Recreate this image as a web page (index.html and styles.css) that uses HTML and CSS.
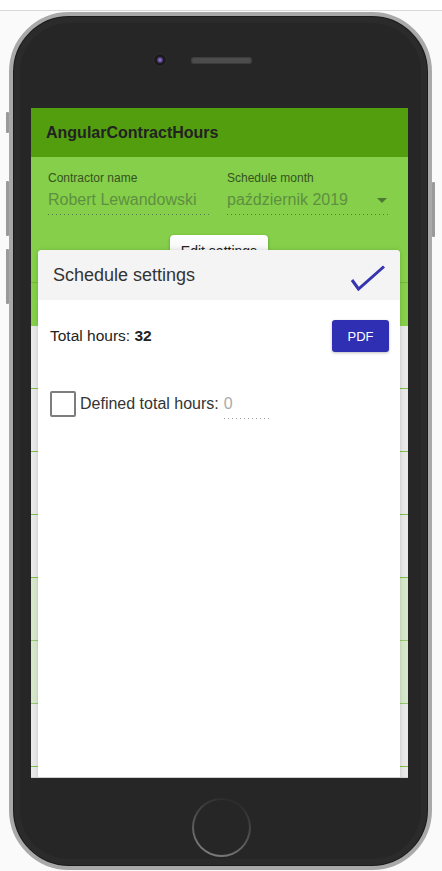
FILE: index.html
```html
<!DOCTYPE html>
<html lang="en">
<head>
<meta charset="utf-8">
<title>AngularContractHours</title>
<link rel="stylesheet" href="styles.css">
</head>
<body>
<div class="topbar"></div>
<div class="phone">
  <span class="btn btn-mute"></span>
  <span class="btn btn-vol1"></span>
  <span class="btn btn-vol2"></span>
  <span class="btn btn-power"></span>
  <div class="phone-top">
    <div class="sensors">
      <span class="camera"><span class="lens"></span></span>
      <span class="speaker"></span>
    </div>
  </div>
  <div class="screen">
    <header class="toolbar">AngularContractHours</header>
    <section class="form">
      <div class="fields">
        <div class="field">
          <div class="label">Contractor name</div>
          <div class="value">Robert Lewandowski</div>
        </div>
        <div class="field">
          <div class="label">Schedule month</div>
          <div class="value select"><span>październik 2019</span><span class="arrow"></span></div>
        </div>
      </div>
      <div class="actions"><button class="edit">Edit settings</button></div>
    </section>
    <div class="table-head"></div>
    <div class="rows">
      <div class="row"></div>
      <div class="row"></div>
      <div class="row"></div>
      <div class="row"></div>
      <div class="row weekend"></div>
      <div class="row weekend"></div>
      <div class="row"></div>
      <div class="row"></div>
    </div>
    <div class="dialog">
      <div class="dialog-head">
        <span class="dialog-title">Schedule settings</span>
        <svg class="check" width="36" height="28" viewBox="0 0 36 28"><polyline points="2,16 8.5,25 34,2.5" fill="none" stroke="#3535b0" stroke-width="3"/></svg>
      </div>
      <div class="dialog-body">
        <div class="total-row">
          <span class="total">Total hours: <b>32</b></span>
          <button class="pdf">PDF</button>
        </div>
        <div class="check-row">
          <span class="checkbox"></span>
          <span class="check-label">Defined total hours:</span>
          <span class="hours-input">0</span>
        </div>
      </div>
    </div>
  </div>
  <div class="phone-bottom">
    <span class="home"><span class="home-inner"></span></span>
  </div>
</div>
</body>
</html>
```
FILE: styles.css
```css
html, body {
  margin: 0;
  padding: 0;
}
body {
  background: #fafafa;
  height: 871px;
  overflow: hidden;
  font-family: "Liberation Sans", Arial, sans-serif;
}
.topbar {
  height: 10px;
  background: #ffffff;
  border-bottom: 1px solid #d9d9d9;
}
.phone {
  position: relative;
  box-sizing: border-box;
  width: 423px;
  height: 858px;
  margin: 1px 0 0 9px;
  padding: 0 19px 0 18px;
  border: 4px solid #a9a9a9;
  border-radius: 60px;
  background: #262626;
  box-shadow: inset 0 0 0 1px #1c1c1c, inset 0 0 0 7px #2b2b2b;
}
.btn {
  position: absolute;
  width: 3px;
  background: #9a9a9a;
  border-radius: 1px;
}
.btn-mute { left: -7px; top: 96px; height: 21px; }
.btn-vol1 { left: -7px; top: 165px; height: 55px; }
.btn-vol2 { left: -7px; top: 233px; height: 55px; }
.btn-power { right: -7px; top: 166px; height: 55px; }
.phone-top {
  box-sizing: border-box;
  height: 92px;
  padding: 37px 0 0 122px;
}
.sensors {
  display: flex;
  align-items: center;
  gap: 24px;
  height: 14px;
}
.camera {
  box-sizing: border-box;
  width: 14px;
  height: 14px;
  border-radius: 50%;
  background: #1b1b1b;
  display: flex;
  align-items: center;
  justify-content: center;
  box-shadow: inset 0 0 0 1px #303030;
}
.lens {
  width: 6px;
  height: 6px;
  border-radius: 50%;
  background: radial-gradient(circle, #8a74b8 0 20%, #55408a 50%, #3a2d5c 100%);
}
.speaker {
  width: 61px;
  height: 7px;
  border-radius: 4px;
  background: #4c4c4c;
  box-shadow: inset 0 0 0 1px #3c3c3c;
}
.screen {
  position: relative;
  width: 377px;
  height: 669px;
  overflow: hidden;
  background: #ffffff;
  border-bottom: 1px solid #cfcfcf;
}
.toolbar {
  height: 49px;
  display: flex;
  align-items: center;
  padding-left: 15px;
  background: #529e0e;
  color: #222222;
  font-weight: bold;
  font-size: 16px;
}
.form {
  background: #85cf4a;
  padding: 14px 18px 15px 17px;
}
.fields {
  display: grid;
  grid-template-columns: 162px 163px;
  column-gap: 17px;
}
.label {
  font-size: 12px;
  line-height: 14px;
  color: #35531f;
}
.value {
  margin-top: 5px;
  font-size: 16px;
  line-height: 20px;
  color: #5e8f40;
  padding-bottom: 5px;
  background-image: linear-gradient(to right, #5a7d45 1px, transparent 1px);
  background-size: 4px 1px;
  background-repeat: repeat-x;
  background-position: 0 100%;
  height: 20px;
}
.select {
  display: flex;
  justify-content: space-between;
  align-items: center;
}
.arrow {
  width: 0;
  height: 0;
  margin-right: 3px;
  border-left: 5px solid transparent;
  border-right: 5px solid transparent;
  border-top: 5px solid #4d7a32;
}
.actions {
  display: flex;
  justify-content: center;
  margin-top: 20px;
}
.edit {
  width: 98px;
  height: 32px;
  border: none;
  border-radius: 4px;
  background: linear-gradient(#ffffff, #ececec);
  box-shadow: 0 1px 3px rgba(0,0,0,0.3);
  font-family: inherit;
  font-size: 14px;
  color: #222222;
  padding: 0;
}
.table-head {
  height: 43px;
  background: #85cf4a;
  border-top: 1px solid #74b840;
}
.row {
  height: 62px;
  background: #e8e8e8;
  border-bottom: 1px solid #7cc14a;
}
.row.weekend {
  background: #d7e8ca;
  border-bottom-color: #94c872;
}
.dialog {
  position: absolute;
  top: 142px;
  left: 7px;
  right: 8px;
  bottom: -20px;
  background: #ffffff;
  border-radius: 4px;
  box-shadow: 0 0 5px rgba(0,0,0,0.12), 0 1px 2px rgba(0,0,0,0.08);
}
.dialog-head {
  height: 50px;
  display: flex;
  align-items: center;
  padding: 0 14px 0 15px;
  background: #f4f4f4;
  border-radius: 4px 4px 0 0;
}
.dialog-title {
  font-size: 18px;
  color: #333333;
}
.check {
  margin-left: auto;
  margin-top: 6px;
}
.dialog-body {
  padding: 20px 11px 0 12px;
}
.total-row {
  display: flex;
  justify-content: space-between;
  align-items: center;
}
.total {
  font-size: 15.5px;
  color: #222222;
}
.pdf {
  width: 57px;
  height: 32px;
  border: none;
  border-radius: 3px;
  background: #2f2fb4;
  color: #ffffff;
  font-family: inherit;
  font-size: 13px;
  padding: 0;
  box-shadow: 0 1px 3px rgba(0,0,0,0.25);
}
.check-row {
  display: flex;
  align-items: center;
  margin-top: 37px;
}
.checkbox {
  box-sizing: border-box;
  width: 26px;
  height: 26px;
  border: 2px solid #7d7d7d;
  border-radius: 2px;
  margin-right: 4px;
}
.check-label {
  font-size: 16px;
  line-height: 20px;
  color: #333333;
}
.hours-input {
  box-sizing: border-box;
  width: 48px;
  margin-left: 5px;
  margin-top: 5px;
  padding-bottom: 5px;
  font-size: 16px;
  line-height: 20px;
  color: #aaaaaa;
  background-image: linear-gradient(to right, #9a9a9a 1px, transparent 1px);
  background-size: 4px 1px;
  background-repeat: repeat-x;
  background-position: 0 100%;
}
.phone-bottom {
  display: flex;
  justify-content: center;
  padding: 20px 0 0 3px;
}
.home {
  box-sizing: border-box;
  width: 59px;
  height: 59px;
  padding: 2px;
  border-radius: 50%;
  background: linear-gradient(200deg, #2a2a2a 10%, #5a5a5a 60%, #8a8a8a 100%);
}
.home-inner {
  display: block;
  width: 100%;
  height: 100%;
  border-radius: 50%;
  background: #262626;
}
```
